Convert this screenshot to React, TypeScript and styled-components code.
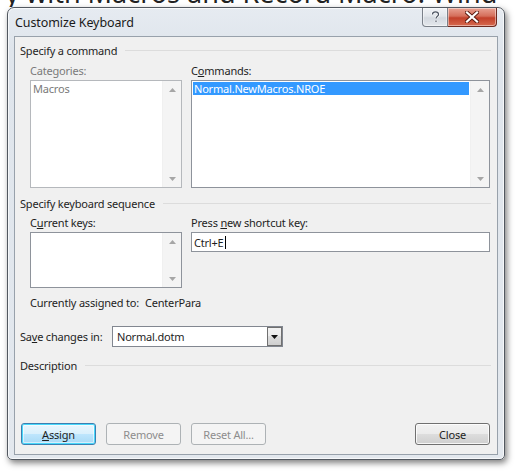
import React from "react";
import styled, { createGlobalStyle } from "styled-components";

const GlobalStyle = createGlobalStyle`
  html, body { margin: 0; padding: 0; background: #ffffff; }
  body { width: 520px; height: 472px; overflow: hidden; font-family: "Noto Sans", "Open Sans", sans-serif; }
`;

const Page = styled.div`
  width: 520px;
  height: 472px;
  display: flex;
  flex-direction: column;
  background: #fff;
  overflow: hidden;
`;

const BackStrip = styled.div`
  height: 7px;
  overflow: hidden;
  flex: none;
`;

const BackText = styled.div`
  font-family: "Noto Sans", sans-serif;
  font-size: 27px;
  line-height: 27px;
  color: #222;
  white-space: nowrap;
  margin-top: -21px;
  margin-left: -6px;
`;

const Window = styled.div`
  margin-left: 7px;
  width: 498px;
  height: 453px;
  box-sizing: border-box;
  border: 1px solid #525860;
  border-radius: 7px 7px 5px 5px;
  background: linear-gradient(#e6ebf1, #dfe5ec 40px, #e3e8ee);
  box-shadow: 2px 3px 6px rgba(0, 0, 0, 0.5), inset 0 0 0 1px rgba(255, 255, 255, 0.7);
  display: flex;
  flex-direction: column;
  padding: 0 6px 4px 6px;
  flex: none;
`;

const TitleBar = styled.div`
  height: 28px;
  display: flex;
  align-items: flex-start;
  flex: none;
`;

const Title = styled.div`
  font-size: 12.5px;
  color: #1a1a1a;
  padding: 6px 0 0 1px;
  flex: 1;
  letter-spacing: -0.1px;
`;

const Controls = styled.div`
  display: flex;
  margin-right: 1px;
`;

const CaptionButton = styled.div<{ $w: number; $close?: boolean }>`
  width: ${(p) => p.$w}px;
  height: 19px;
  box-sizing: border-box;
  display: flex;
  align-items: center;
  justify-content: center;
  border: 1px solid ${(p) => (p.$close ? "#6d2a20" : "#7a8089")};
  border-top: none;
  border-radius: ${(p) => (p.$close ? "0 0 4px 0" : "0 0 0 4px")};
  ${(p) => (p.$close ? "border-left: none;" : "")}
  background: ${(p) =>
    p.$close
      ? "linear-gradient(#e8a293, #d56e5a 45%, #c2402a 55%, #d66a4f)"
      : "linear-gradient(#f1f3f6, #e1e5ea 45%, #d3d8df 55%, #e4e8ec)"};
  box-shadow: inset 0 0 0 1px rgba(255, 255, 255, 0.45);
`;

const Client = styled.div`
  flex: 1;
  border: 1px solid #98a1ab;
  background: #f0f0f0;
  display: flex;
  flex-direction: column;
  padding: 6px 6px 9px 5px;
  color: #1e1e1e;
  font-size: 11px;
  letter-spacing: -0.2px;
`;

const SectionTitle = styled.div<{ $mt: number }>`
  height: 14px;
  display: flex;
  align-items: center;
  margin-top: ${(p) => p.$mt}px;
  flex: none;
  &::after {
    content: "";
    flex: 1;
    border-top: 1px solid #dcdcdc;
    margin-left: 8px;
    margin-top: 1px;
  }
`;

const TwoCols = styled.div<{ $mt: number }>`
  display: grid;
  grid-template-columns: 152px 299px;
  column-gap: 9px;
  margin: ${(p) => p.$mt}px 0 0 10px;
  flex: none;
`;

const Field = styled.div`
  display: flex;
  flex-direction: column;
`;

const Label = styled.div<{ $disabled?: boolean }>`
  height: 14px;
  line-height: 14px;
  margin-bottom: 2px;
  color: ${(p) => (p.$disabled ? "#7a7a7a" : "#1e1e1e")};
  u { text-decoration: underline; text-underline-offset: 1px; }
`;

const ListBox = styled.div<{ $h: number; $disabled?: boolean }>`
  height: ${(p) => p.$h}px;
  box-sizing: border-box;
  border: 1px solid ${(p) => (p.$disabled ? "#b5b8bc" : "#8e939b")};
  background: #fff;
  display: flex;
`;

const ListItems = styled.div`
  flex: 1;
  padding: 1px;
  display: flex;
  flex-direction: column;
`;

const ListItem = styled.div<{ $selected?: boolean; $disabled?: boolean }>`
  height: 13px;
  line-height: 13px;
  padding-left: 1px;
  background: ${(p) => (p.$selected ? "#3399ff" : "transparent")};
  color: ${(p) => (p.$selected ? "#fff" : p.$disabled ? "#7a7a7a" : "#1e1e1e")};
`;

const ScrollTrack = styled.div`
  width: 18px;
  background: #f4f4f4;
  border-left: 1px solid #f0f0f0;
  display: flex;
  flex-direction: column;
  justify-content: space-between;
  align-items: center;
`;

const ArrowCell = styled.div`
  height: 17px;
  display: flex;
  align-items: center;
  justify-content: center;
`;

const TextInput = styled.div`
  height: 20px;
  box-sizing: border-box;
  border: 1px solid #8e939b;
  background: #fff;
  display: flex;
  align-items: center;
  padding-left: 2px;
`;

const Caret = styled.span`
  display: inline-block;
  width: 1px;
  height: 13px;
  background: #000;
  margin-left: 1px;
  vertical-align: middle;
`;

const AssignedRow = styled.div`
  height: 14px;
  line-height: 14px;
  margin: 8px 0 0 10px;
  display: flex;
  flex: none;
`;

const AssignedLabel = styled.span`
  width: 115px;
`;

const SaveRow = styled.div`
  display: flex;
  align-items: center;
  margin-top: 16px;
  height: 21px;
  flex: none;
  u { text-decoration: underline; text-underline-offset: 1px; }
`;

const SaveLabel = styled.span`
  width: 92px;
`;

const Select = styled.div`
  width: 171px;
  height: 21px;
  box-sizing: border-box;
  border: 1px solid #828790;
  background: #fff;
  display: flex;
`;

const SelectValue = styled.div`
  flex: 1;
  padding-left: 4px;
  line-height: 19px;
`;

const SelectButton = styled.div`
  width: 15px;
  box-sizing: border-box;
  border: 1px solid #707070;
  background: linear-gradient(#f2f2f2, #ebebeb 50%, #dddddd 50%, #cfcfcf);
  display: flex;
  align-items: center;
  justify-content: center;
`;

const Spacer = styled.div`
  flex: 1;
`;

const ButtonRow = styled.div`
  display: flex;
  gap: 10px;
  margin-left: 1px;
  margin-right: 1px;
  flex: none;
`;

const Button = styled.div<{ $variant?: "default" | "disabled" }>`
  width: 75px;
  height: 22px;
  box-sizing: border-box;
  border-radius: 3px;
  display: flex;
  align-items: center;
  justify-content: center;
  border: 1px solid
    ${(p) => (p.$variant === "default" ? "#3c7fb1" : p.$variant === "disabled" ? "#adb2b5" : "#707070")};
  background: ${(p) =>
    p.$variant === "disabled"
      ? "#f4f4f4"
      : p.$variant === "default"
      ? "linear-gradient(#eaf6fd, #d9f0fc 50%, #bee6fd 50%, #a7d9f5)"
      : "linear-gradient(#f2f2f2, #ebebeb 50%, #dddddd 50%, #cfcfcf)"};
  box-shadow: ${(p) =>
    p.$variant === "default"
      ? "inset 0 0 0 1px #48d8fb, inset 0 0 0 2px rgba(255,255,255,0.5)"
      : p.$variant === "disabled"
      ? "none"
      : "inset 0 0 0 1px rgba(255,255,255,0.8)"};
  color: ${(p) => (p.$variant === "disabled" ? "#8d8d8d" : "#1e1e1e")};
  u { text-decoration: underline; text-underline-offset: 1px; }
`;

const Up = () => (
  <svg width="7" height="4" viewBox="0 0 7 4">
    <path d="M0 4 L3.5 0 L7 4 Z" fill="#a6a6a6" />
  </svg>
);
const Down = ({ color = "#a6a6a6" }: { color?: string }) => (
  <svg width="7" height="4" viewBox="0 0 7 4">
    <path d="M0 0 L3.5 4 L7 0 Z" fill={color} />
  </svg>
);

const Scroll = () => (
  <ScrollTrack>
    <ArrowCell>
      <Up />
    </ArrowCell>
    <ArrowCell>
      <Down />
    </ArrowCell>
  </ScrollTrack>
);

export default function App() {
  return (
    <>
      <GlobalStyle />
      <Page>
        <BackStrip>
          <BackText>ry with Macros and Record Macro: Wind</BackText>
        </BackStrip>
        <Window>
          <TitleBar>
            <Title>Customize Keyboard</Title>
            <Controls>
              <CaptionButton $w={26}>
                <svg width="9" height="12" viewBox="0 0 9 12">
                  <path
                    d="M1.5 3.5 C1.5 1.5 3 0.8 4.5 0.8 C6.3 0.8 7.5 1.9 7.5 3.4 C7.5 5.2 5 5.4 5 7.6 M5 9.6 L5 11"
                    fill="none"
                    stroke="#fff"
                    strokeWidth="2.6"
                  />
                  <path
                    d="M1.5 3.5 C1.5 1.5 3 0.8 4.5 0.8 C6.3 0.8 7.5 1.9 7.5 3.4 C7.5 5.2 5 5.4 5 7.6 M5 9.6 L5 11"
                    fill="none"
                    stroke="#4a5260"
                    strokeWidth="1.2"
                  />
                </svg>
              </CaptionButton>
              <CaptionButton $w={49} $close>
                <svg width="14" height="12" viewBox="0 0 14 12">
                  <path d="M2 1.5 L12 10.5 M12 1.5 L2 10.5" stroke="#5a1a10" strokeWidth="4" strokeLinecap="square" />
                  <path d="M2 1.5 L12 10.5 M12 1.5 L2 10.5" stroke="#ffffff" strokeWidth="2.2" strokeLinecap="square" />
                </svg>
              </CaptionButton>
            </Controls>
          </TitleBar>
          <Client>
            <SectionTitle $mt={0}>Specify a command</SectionTitle>
            <TwoCols $mt={7}>
              <Field>
                <Label $disabled>Categories:</Label>
                <ListBox $h={108} $disabled>
                  <ListItems>
                    <ListItem $disabled>Macros</ListItem>
                  </ListItems>
                  <Scroll />
                </ListBox>
              </Field>
              <Field>
                <Label>
                  C<u>o</u>mmands:
                </Label>
                <ListBox $h={108}>
                  <ListItems>
                    <ListItem $selected>Normal.NewMacros.NROE</ListItem>
                  </ListItems>
                  <Scroll />
                </ListBox>
              </Field>
            </TwoCols>
            <SectionTitle $mt={8}>Specify keyboard sequence</SectionTitle>
            <TwoCols $mt={6}>
              <Field>
                <Label>
                  C<u>u</u>rrent keys:
                </Label>
                <ListBox $h={56}>
                  <ListItems />
                  <Scroll />
                </ListBox>
              </Field>
              <Field>
                <Label>
                  Press <u>n</u>ew shortcut key:
                </Label>
                <TextInput>
                  <span>Ctrl+E</span>
                  <Caret />
                </TextInput>
              </Field>
            </TwoCols>
            <AssignedRow>
              <AssignedLabel>Currently assigned to:</AssignedLabel>
              <span>CenterPara</span>
            </AssignedRow>
            <SaveRow>
              <SaveLabel>
                Sa<u>v</u>e changes in:
              </SaveLabel>
              <Select>
                <SelectValue>Normal.dotm</SelectValue>
                <SelectButton>
                  <Down color="#111" />
                </SelectButton>
              </Select>
            </SaveRow>
            <SectionTitle $mt={11}>Description</SectionTitle>
            <Spacer />
            <ButtonRow>
              <Button $variant="default">
                <span>
                  <u>A</u>ssign
                </span>
              </Button>
              <Button $variant="disabled">Remove</Button>
              <Button $variant="disabled">Reset All...</Button>
              <Spacer />
              <Button>Close</Button>
            </ButtonRow>
          </Client>
        </Window>
      </Page>
    </>
  );
}
